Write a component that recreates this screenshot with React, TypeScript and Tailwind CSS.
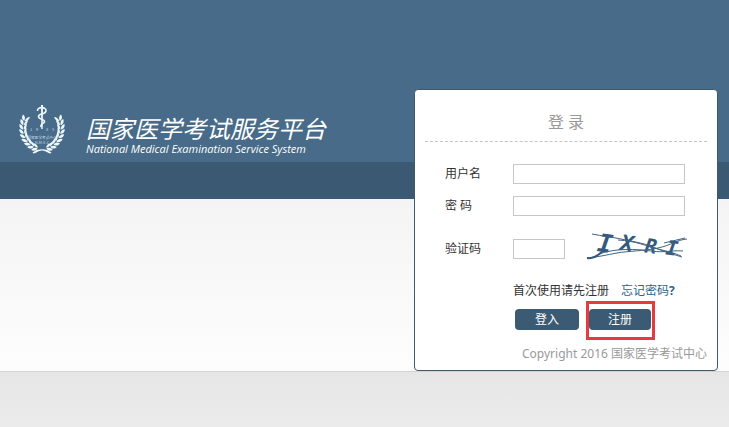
import React from "react"

const LEAF_ANGLES = [108, 120, 132, 144, 156, 168, 180, 192, 204]

const Branch: React.FC = () => (
    <g fill="#eef8fc">
        {LEAF_ANGLES.map((angle) => {
            const rad = (angle * Math.PI) / 180
            const x = 24 + Math.cos(rad) * 19
            const y = 25 + Math.sin(rad) * 21
            return (
                <g
                    key={angle}
                    transform={`translate(${x} ${y}) rotate(${angle + 90})`}
                >
                    <path d="M-1.5 .2C-1-3 1.5-4 4-3.5 3.5-1 1.5 .2-1.5 .2Z" />
                    <path d="M-1.5 .7C1 .5 3.5 1.5 4.5 3.8 1.5 4-1 3-1.5 .7Z" />
                </g>
            )
        })}
    </g>
)

const Emblem: React.FC = () => (
    <svg
        viewBox="0 0 48 52"
        className="w-12 h-[52px] shrink-0"
        aria-hidden="true"
    >
        <Branch />
        <g transform="translate(48 0) scale(-1 1)">
            <Branch />
        </g>
        <path
            d="M15 50C21 45 26 46 32 50M33 50C27 45 22 46 16 50"
            fill="none"
            stroke="#eef8fc"
            strokeWidth="1.4"
        />
        {/* Staff and snake */}
        <path d="M23 2h2l-.3 24h-1.4Z" fill="#eef8fc" />
        <path
            d="M19.5 8C19 3 29 4 28 8 27 12 20.5 10 20.5 13.5 20.5 17 27 15.5 26.5 19 25.5 21 22 21 23 24"
            fill="none"
            stroke="#eef8fc"
            strokeWidth="1.6"
        />
        <g
            fill="#c3d9e6"
            textAnchor="middle"
            className="font-['Noto_Sans_CJK_SC',sans-serif]"
        >
            <text x="13" y="28" fontSize="4">1</text>
            <text x="19" y="28" fontSize="4">9</text>
            <text x="29" y="28" fontSize="4">8</text>
            <text x="35" y="28" fontSize="4">5</text>
            <text x="24" y="36" fontSize="3.6">国家医学考试中心</text>
            <text x="24" y="41" fontSize="4">N.M.E.C</text>
        </g>
    </svg>
)

const Captcha: React.FC = () => (
    <svg
        viewBox="0 0 102 32"
        className="w-[102px] h-8"
        role="img"
        aria-label="验证码"
    >
        <g
            fill="#34597a"
            fontWeight="bold"
            fontStyle="italic"
            textAnchor="middle"
            className="font-['DejaVu_Sans_Mono',monospace]"
        >
            <text transform="translate(18 19) rotate(8)" fontSize="25">I</text>
            <text transform="translate(40 18) rotate(8)" fontSize="22">X</text>
            <text transform="translate(64 20) rotate(8)" fontSize="20">R</text>
            <text transform="translate(85 22) rotate(8)" fontSize="20">I</text>
        </g>
        <g fill="none" stroke="#3f6483" strokeWidth="1">
            <path d="M6 1C16 3 26 4 35 6S58 10 67 14 86 21 96 24" />
            <path d="M1 25C12 24 20 22 31 20S58 18 72 15 90 7 101 6" />
            <path d="M13 21C30 15 50 16 65 18S85 17 97 18" />
            <path d="M32 7C50 8 60 13 72 16S88 20 95 23" />
            <path d="M78 10L99 5" />
        </g>
        <path d="M1 25C8 26 12 22 17 18" fill="none" stroke="#34597a" strokeWidth="2" />
    </svg>
)

const inputClass = "h-5 border border-[#c6c6c6] bg-white px-1 text-xs outline-none"
const buttonClass = "h-[21px] rounded-sm bg-[#3b5a73] text-center text-xs text-white"

const LoginCard: React.FC = () => (
    <form className="w-[304px] shrink-0 rounded-sm border border-[#405a6c] bg-white px-[10px] pb-2 text-xs text-[#333]">
        <h2 className="border-b border-dashed border-[#c4c4c4] pt-5 pb-[7px] text-center text-base leading-6 text-[#999]">
            登 录
        </h2>

        <div className="grid grid-cols-[68px_1fr] items-center gap-y-3 pt-[22px] pl-5">
            <label htmlFor="username">用户名</label>
            <input id="username" type="text" className={`${inputClass} w-[172px]`} />

            <label htmlFor="password">密 码</label>
            <input id="password" type="password" className={`${inputClass} w-[172px]`} />

            <label htmlFor="code">验证码</label>
            <div className="flex h-[42px] items-center gap-[21px]">
                <input id="code" type="text" className={`${inputClass} w-[52px]`} />
                <Captcha />
            </div>
        </div>

        <div className="flex gap-3 pt-[13px] pl-[88px] leading-4">
            <span>首次使用请先注册</span>
            <a href="#forgot" className="text-[#2c6487]">
                忘记密码<b>?</b>
            </a>
        </div>

        <div className="flex gap-[10px] pt-[10px] pl-[90px]">
            <button type="submit" className={`${buttonClass} w-16`}>
                登入
            </button>
            <div className="relative flex">
                <button type="button" className={`${buttonClass} w-[62px]`}>
                    注册
                </button>
                {/* Highlight frame */}
                <div className="pointer-events-none absolute -top-2 -right-1 -bottom-[10px] -left-[3px] border-3 border-[#e53a40]" />
            </div>
        </div>

        <p className="pt-4 text-right leading-4 text-[#999]">
            Copyright 2016 国家医学考试中心
        </p>
    </form>
)

const App: React.FC = () => {
    return (
        <div className="flex min-h-screen flex-col bg-[#ebebeb] font-['Noto_Sans','Noto_Sans_CJK_SC',sans-serif]">
            <div className="grid">
                {/* Background bands */}
                <div className="col-start-1 row-start-1 flex flex-col">
                    <div className="h-[162px] bg-[#476b88]" />
                    <div className="h-[37px] bg-[#3b5973]" />
                    <div className="flex-1 bg-linear-to-b from-[#f4f4f4] to-[#fdfdfd]" />
                </div>

                <div className="col-start-1 row-start-1 flex items-start justify-between pt-[89px] pr-[11px] pl-[18px]">
                    <header className="flex items-start gap-5 pt-[14px] text-white">
                        <Emblem />
                        <div className="pt-[14px]">
                            <h1 className="text-2xl leading-6 italic whitespace-nowrap">
                                国家医学考试服务平台
                            </h1>
                            <p className="font-['Open_Sans',sans-serif] text-[11px] leading-4 font-medium italic whitespace-nowrap">
                                National Medical Examination Service System
                            </p>
                        </div>
                    </header>
                    <LoginCard />
                </div>
            </div>

            <div className="flex-1 border-t border-[#d2d2d2] bg-linear-to-b from-[#e6e6e6] to-[#ebebeb]" />
        </div>
    )
}

export default App
